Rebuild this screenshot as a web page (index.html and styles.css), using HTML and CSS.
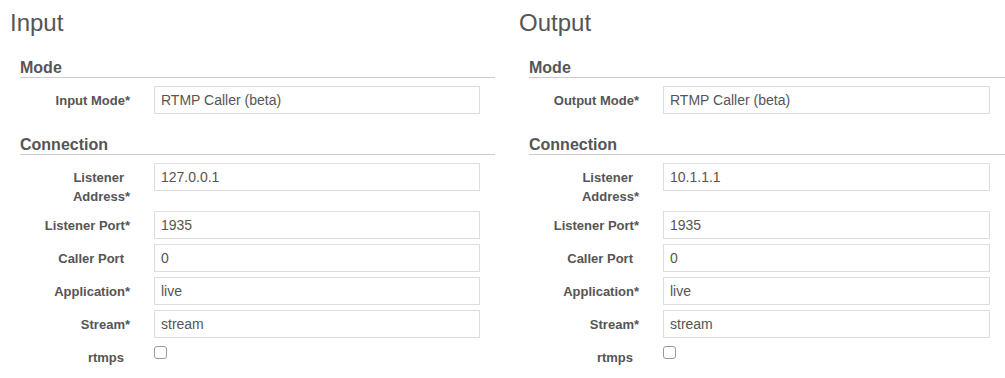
FILE: index.html
```html
<!DOCTYPE html>
<html lang="en">
<head>
    <meta charset="UTF-8">
    <meta name="viewport" content="width=device-width, initial-scale=1.0">
    <title>Stream Settings</title>
    <link rel="stylesheet" href="styles.css">
</head>
<body>
    <div class="page">
        <div class="col">
            <h2 class="title">Input</h2>
            <div class="section">
                <div class="legend">Mode</div>
                <div class="row"><label>Input Mode<span class="req">*</span></label><input class="field" type="text" value="RTMP Caller (beta)"></div>
            </div>
            <div class="section">
                <div class="legend">Connection</div>
                <div class="row"><label>Listener Address<span class="req">*</span></label><input class="field" type="text" value="127.0.0.1"></div>
                <div class="row"><label>Listener Port<span class="req">*</span></label><input class="field" type="text" value="1935"></div>
                <div class="row"><label>Caller Port</label><input class="field" type="text" value="0"></div>
                <div class="row"><label>Application<span class="req">*</span></label><input class="field" type="text" value="live"></div>
                <div class="row"><label>Stream<span class="req">*</span></label><input class="field" type="text" value="stream"></div>
                <div class="row"><label>rtmps</label><div><input class="check" type="checkbox"></div></div>
            </div>
        </div>
        <div class="col">
            <h2 class="title">Output</h2>
            <div class="section">
                <div class="legend">Mode</div>
                <div class="row"><label>Output Mode<span class="req">*</span></label><input class="field" type="text" value="RTMP Caller (beta)"></div>
            </div>
            <div class="section">
                <div class="legend">Connection</div>
                <div class="row"><label>Listener Address<span class="req">*</span></label><input class="field" type="text" value="10.1.1.1"></div>
                <div class="row"><label>Listener Port<span class="req">*</span></label><input class="field" type="text" value="1935"></div>
                <div class="row"><label>Caller Port</label><input class="field" type="text" value="0"></div>
                <div class="row"><label>Application<span class="req">*</span></label><input class="field" type="text" value="live"></div>
                <div class="row"><label>Stream<span class="req">*</span></label><input class="field" type="text" value="stream"></div>
                <div class="row"><label>rtmps</label><div><input class="check" type="checkbox"></div></div>
            </div>
        </div>
    </div>
</body>
</html>
```

FILE: styles.css
```css
body {
    margin: 0;
    background-color: #fff;
    color: #555;
    font-family: "Liberation Sans", Arial, sans-serif;
}
.page {
    display: grid;
    grid-template-columns: 485px 486px;
    column-gap: 24px;
    padding-left: 10px;
}
.title {
    margin: 10px 0 0 0;
    font-size: 24px;
    font-weight: normal;
    line-height: 26px;
    color: #555;
}
.section {
    margin-left: 10px;
}
.title + .section {
    margin-top: 23px;
}
.section + .section {
    margin-top: 22px;
}
.legend {
    font-size: 16px;
    font-weight: bold;
    line-height: 18px;
    border-bottom: 1px solid #ccc;
    margin-bottom: 8px;
}
.row {
    display: grid;
    grid-template-columns: 100px 1fr;
    column-gap: 30px;
    padding: 0 15px 0 4px;
    margin-bottom: 5px;
}
.row label {
    text-align: right;
    font-size: 13px;
    font-weight: bold;
    line-height: 19px;
    padding-top: 5px;
}
.req {
    margin-right: -6px;
}
.field {
    box-sizing: border-box;
    width: 100%;
    height: 28px;
    margin: 0;
    padding: 0 6px;
    border: 1px solid #ddd;
    border-radius: 0;
    font-family: "Liberation Sans", Arial, sans-serif;
    font-size: 14px;
    color: #555;
    background: #fff;
}
.check {
    appearance: none;
    display: block;
    box-sizing: border-box;
    width: 13px;
    height: 13px;
    margin: 3px 0 0 0;
    border: 1px solid #999;
    border-radius: 3px;
    background: #fff;
}
```
